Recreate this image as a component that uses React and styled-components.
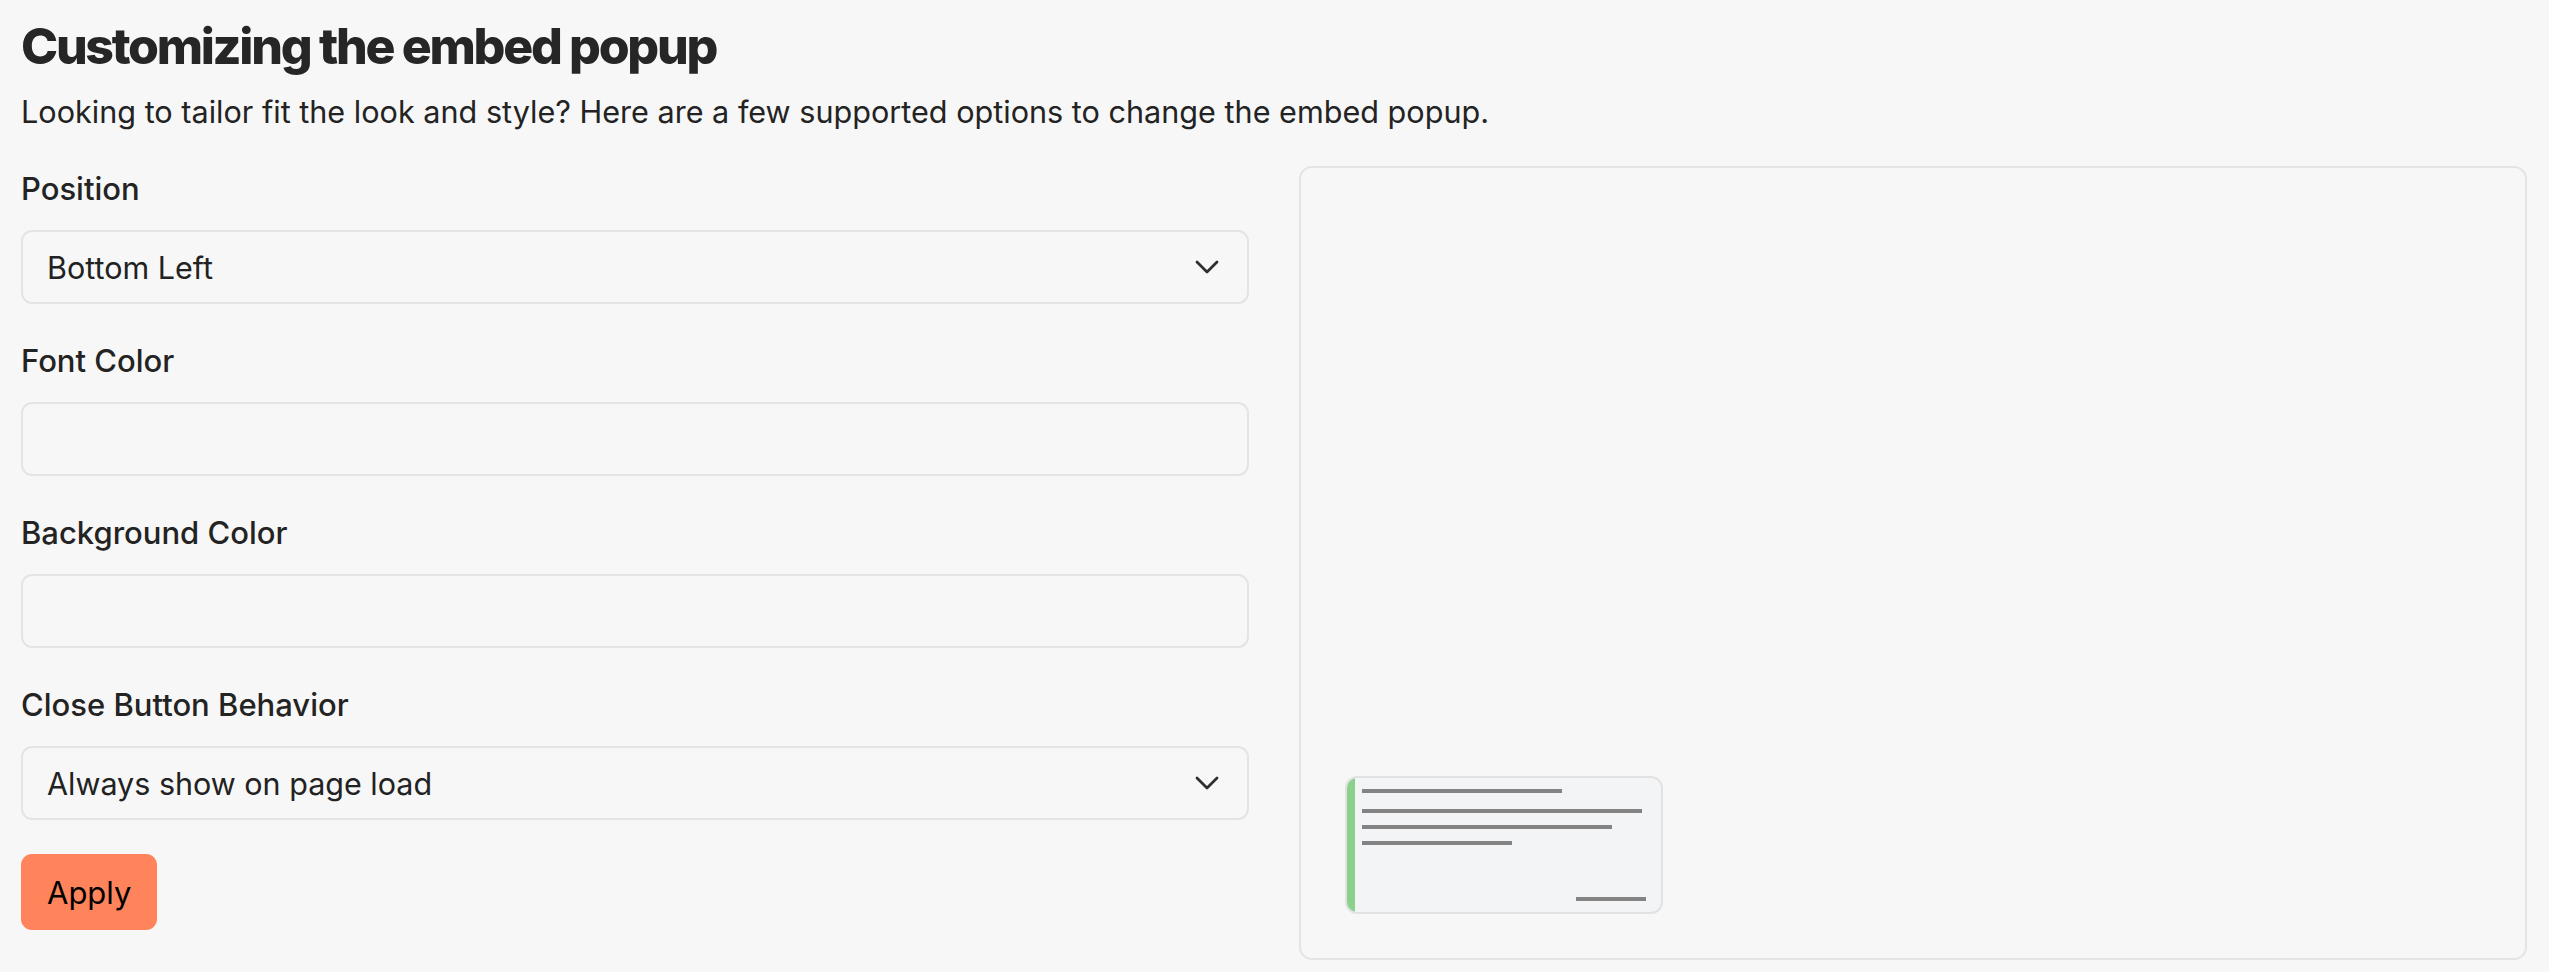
import React from "react";
import styled, { createGlobalStyle } from "styled-components";

const Global = createGlobalStyle`
  html, body { margin: 0; padding: 0; background: #f7f7f7; }
  body { font-family: Inter, "Noto Sans", sans-serif; color: #232323; }
  * { box-sizing: border-box; }
`;

const Page = styled.div`
  padding: 15px 22px 12px 21px;
`;

const Title = styled.h1`
  margin: 0;
  font-family: Inter, sans-serif;
  font-weight: 800;
  font-size: 50px;
  line-height: 62px;
  letter-spacing: -2.3px;
  color: #262626;
`;

const Subtitle = styled.p`
  margin: 12px 0 0;
  font-size: 30.6px;
  line-height: 46px;
  color: #232323;
`;

const Columns = styled.div`
  margin-top: 31px;
  display: grid;
  grid-template-columns: 1fr 1fr;
  column-gap: 50px;
  align-items: start;
`;

const Form = styled.div`
  display: flex;
  flex-direction: column;
  align-items: flex-start;
`;

const Field = styled.div`
  width: 100%;
  margin-bottom: 34px;
`;

const Label = styled.div`
  font-size: 31px;
  line-height: 46px;
  font-weight: 500;
  color: #232323;
  margin-bottom: 18px;
`;

const Control = styled.div`
  height: 74px;
  width: 100%;
  border: 2px solid #e4e4e4;
  border-radius: 11px;
  background: #f7f7f7;
  display: flex;
  align-items: center;
  justify-content: space-between;
  padding: 0 28px 0 24px;
  font-size: 30.5px;
  color: #222;
`;

const TextInput = styled.input`
  display: block;
  height: 74px;
  width: 100%;
  border: 2px solid #e4e4e4;
  border-radius: 11px;
  background: #f7f7f7;
  padding: 0 24px;
  font-family: Inter, sans-serif;
  font-size: 30.5px;
  color: #222;
  outline: none;
`;

const Button = styled.button`
  height: 76px;
  padding: 0 26px;
  border: none;
  border-radius: 11px;
  background: #ff845b;
  font-family: Inter, sans-serif;
  font-size: 31px;
  color: #000;
  cursor: pointer;
`;

const Preview = styled.div`
  height: 794px;
  border: 2px solid #e4e4e4;
  border-radius: 13px;
  background: #f7f7f7;
  display: flex;
  align-items: flex-end;
  justify-content: flex-start;
  padding: 44px;
`;

const Popup = styled.div`
  width: 318px;
  height: 138px;
  border: 2px solid #e2e2e2;
  border-radius: 12px;
  background: #f3f4f6;
  overflow: hidden;
  display: flex;
`;

const Accent = styled.div`
  width: 8px;
  flex: none;
  background: #8bd18b;
`;

const PopupBody = styled.div`
  flex: 1;
  display: flex;
  flex-direction: column;
  padding: 11px 15px 11px 7px;
`;

const Bar = styled.div`
  height: 4px;
  width: ${(p) => p.$w}px;
  background: #838383;
  margin-top: ${(p) => p.$mt || 0}px;
  align-self: ${(p) => (p.$right ? "flex-end" : "flex-start")};
`;

const Spacer = styled.div`
  flex: 1;
`;

const Chevron = () => (
  <svg width="24" height="14" viewBox="0 0 24 14" fill="none">
    <polyline points="2,2 12,12 22,2" stroke="#2e2e2e" strokeWidth="2.8" strokeLinecap="round" strokeLinejoin="round" />
  </svg>
);

export default function App() {
  return (
    <>
      <Global />
      <Page>
        <Title>Customizing the embed popup</Title>
        <Subtitle>
          Looking to tailor fit the look and style? Here are a few supported options to change the embed popup.
        </Subtitle>
        <Columns>
          <Form>
            <Field>
              <Label>Position</Label>
              <Control>
                <span>Bottom Left</span>
                <Chevron />
              </Control>
            </Field>
            <Field>
              <Label>Font Color</Label>
              <TextInput />
            </Field>
            <Field>
              <Label>Background Color</Label>
              <TextInput />
            </Field>
            <Field>
              <Label>Close Button Behavior</Label>
              <Control>
                <span>Always show on page load</span>
                <Chevron />
              </Control>
            </Field>
            <Button>Apply</Button>
          </Form>
          <Preview>
            <Popup>
              <Accent />
              <PopupBody>
                <Bar $w={200} />
                <Bar $w={280} $mt={16} />
                <Bar $w={250} $mt={12} />
                <Bar $w={150} $mt={12} />
                <Spacer />
                <Bar $w={70} $right />
              </PopupBody>
            </Popup>
          </Preview>
        </Columns>
      </Page>
    </>
  );
}
